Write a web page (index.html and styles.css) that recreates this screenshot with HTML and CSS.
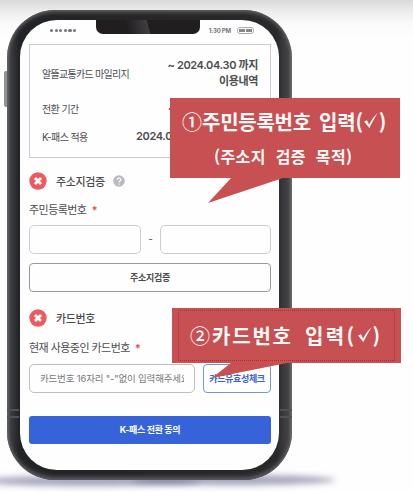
FILE: index.html
```html
<!DOCTYPE html>
<html lang="ko">
<head>
<meta charset="utf-8">
<title>K-패스 전환 동의</title>
<link rel="stylesheet" href="styles.css">
</head>
<body>
<main class="stage">
  <div class="ground ground-left"></div>
  <div class="ground ground-right"></div>
  <div class="side-key"></div>
  <section class="phone">
    <i class="band band-left"></i><i class="band band-right"></i>
    <div class="screen">
      <div class="notch"></div>
      <header class="status">
        <span class="carrier"><i></i><i></i><i></i><i></i><i></i><i></i></span>
        <span class="clock">1:30 PM</span>
        <span class="battery"><i></i><i></i><i></i><i></i></span>
      </header>
      <div class="summary">
        <div class="row row-tall"><span class="key key-long">알뜰교통카드 마일리지</span><span class="value">~ 2024.04.30 까지<br>이용내역</span></div>
        <div class="row"><span class="key">전환 기간</span><span class="value value-mid">~</span></div>
        <div class="row"><span class="key">K-패스 적용</span><span class="value value-wide">2024.0</span></div>
      </div>
      <h2 class="heading">
        <svg class="cross" viewBox="0 0 18 18"><circle cx="9" cy="9" r="8.7"/><path d="M6 6l6 6M12 6l-6 6"/></svg>
        <span>주소지검증</span>
        <svg class="help" viewBox="0 0 12 12"><circle cx="6" cy="6" r="5.8"/><path d="M4.2 4.8c0-2.5 3.7-2.3 3.6-.1C7.8 6 6 5.8 6 7.3M6 8.5v1.2"/></svg>
      </h2>
      <div class="label">주민등록번호<b>*</b></div>
      <div class="pair"><div class="input"></div><span>-</span><div class="input"></div></div>
      <div class="verify">주소지검증</div>
      <h2 class="heading heading-card">
        <svg class="cross" viewBox="0 0 18 18"><circle cx="9" cy="9" r="8.7"/><path d="M6 6l6 6M12 6l-6 6"/></svg>
        <span>카드번호</span>
      </h2>
      <div class="label label-card">현재 사용중인 카드번호<b>*</b></div>
      <div class="card-line"><div class="input card-input"><span>카드번호 16자리 "-"없이 입력해주세요</span></div><div class="check">카드유효성체크</div></div>
      <div class="submit">K-패스 전환 동의</div>
    </div>
  </section>
  <aside class="callout callout-one">
    <svg class="tail" viewBox="0 0 80 27"><path d="M24 0L0 26L78 0z"/></svg>
    <p class="title"><span class="num">①</span><span class="w1">주민등록번호</span><span class="w2">입력(<svg class="tick" viewBox="0 0 16 18"><path d="M1 8.500l3-1.200 2 4.200Q9.500 4.500 14.500 0 10 8 6.300 15z"/></svg>)</span></p>
    <p class="sub">(주소지 검증 목적)</p>
  </aside>
  <aside class="callout callout-two">
    <svg class="tail" viewBox="0 0 80 17"><path d="M20 0L0 16L80 0z"/></svg>
    <div class="dots"></div>
    <p class="title"><span class="num">②</span><span class="w1">카드번호</span><span class="w2">입력(<svg class="tick" viewBox="0 0 16 18"><path d="M1 8.500l3-1.200 2 4.200Q9.500 4.500 14.500 0 10 8 6.300 15z"/></svg>)</span></p>
  </aside>
</main>
</body>
</html>
```
FILE: styles.css
```css
* { box-sizing: border-box; }
body { margin: 0; font-family: Inter, "Noto Sans CJK KR", sans-serif; }
h2, p { margin: 0; }
.stage {
  position: relative;
  width: 413px;
  height: 492px;
  padding: 10px 0 0 7px;
  overflow: hidden;
  background: linear-gradient(#d9d9d9 0, #eee 12px, #fafafa 24px, #fefefe 40px);
}
.ground { position: absolute; height: 10px; border-radius: 50%; background: #65658c; filter: blur(3px); }
.ground-left { left: -20px; top: 476px; width: 220px; opacity: .6; }
.ground-right { left: 130px; top: 475px; width: 205px; opacity: .6; }
.side-key { position: absolute; left: 4px; top: 71px; width: 4px; height: 36px; border-radius: 2px 0 0 2px; background: #929292; }
.phone {
  position: relative;
  width: 285px;
  height: 470px;
  padding: 10px 13px;
  border-radius: 48px;
  background: linear-gradient(90deg, #606163 0, #3e3f42 3px, #222326 12px, #29292b 270px, #3b3b3d 277px, #444446 282px, #777 285px);
  box-shadow: inset 0 2px 4px #666, inset 0 -3px 4px #5d5d60;
}
.band { position: absolute; top: 399px; width: 12px; height: 9px; border: solid #505153; border-width: 2px 0; }
.band-left { left: 0; }
.band-right { right: 0; }
.screen {
  position: relative;
  height: 450px;
  padding: 6px 8px 0 9px;
  border-radius: 37px;
  background: #fefefe;
  color: #4c4c50;
  overflow: hidden;
}
.notch { position: absolute; left: 76px; top: 0; width: 104px; height: 14px; border-radius: 0 0 7px 7px; background: linear-gradient(75deg, #211e20 0 30%, #403e40 50%, #211e20 51%); }
.status { display: flex; align-items: center; height: 9px; padding: 0 17px 0 21px; }
.carrier { display: flex; gap: 1.3px; }
.carrier i { width: 3.3px; height: 3.3px; border-radius: 50%; background: #77777b; }
.clock { margin-left: auto; font: 700 6px/8px Inter, sans-serif; color: #77777b; letter-spacing: -.15px; }
.battery { display: flex; gap: .6px; width: 17px; height: 7px; margin-left: 6px; padding: 1px; border: 1px solid #aaa; border-radius: 3px; }
.battery i { flex: 1; background: #88888b; }
.summary { height: 114px; margin-top: 9px; padding: 12px 12px 0; border: 1px solid #c9c9ce; }
.row { display: flex; align-items: center; justify-content: space-between; height: 28px; }
.row-tall { height: 32px; margin-bottom: 5px; }
.key { font-size: 10px; letter-spacing: -.6px; white-space: nowrap; }
.key-long { letter-spacing: -.7px; }
.value { font-size: 11px; font-weight: 600; line-height: 16px; letter-spacing: -.35px; text-align: right; white-space: nowrap; }
.value-mid { width: 90px; text-align: left; }
.value-wide { width: 122px; text-align: left; }
.heading { display: flex; align-items: center; height: 18px; margin-top: 14px; font-size: 11px; font-weight: 500; letter-spacing: -.4px; }
.cross { width: 18px; height: 18px; margin-right: 9px; }
.cross circle { fill: #ec5a5d; }
.cross path { stroke: #fff; stroke-width: 2.8; }
.help { width: 12px; height: 12px; margin-left: 8px; }
.help circle { fill: #b9bac1; }
.help path { fill: none; stroke: #fff; stroke-width: 1.2; }
.label { height: 16px; margin-top: 12px; font-size: 11px; line-height: 16px; letter-spacing: -.55px; white-space: nowrap; }
.label b { margin-left: 5px; color: #dc5557; }
.pair { display: grid; grid-template-columns: 112px 19px 111px; height: 29px; margin-top: 7px; text-align: center; font-size: 10px; line-height: 29px; }
.input { border: 1px solid #cccdd1; border-radius: 5px; }
.verify { height: 29px; margin-top: 9px; border: 1px solid #99999d; border-radius: 4px; text-align: center; font-size: 9px; font-weight: 700; line-height: 27px; letter-spacing: -.3px; }
.heading-card { margin-top: 17px; }
.label-card { margin-top: 13px; }
.card-line { display: flex; gap: 8px; height: 29px; margin-top: 8px; }
.card-input { width: 166px; padding: 0 10px; border-color: #bdbdc3; color: #77777a; font-size: 9.5px; line-height: 27px; }
.card-input span { display: block; overflow: hidden; white-space: nowrap; letter-spacing: -.18px; }
.check { flex: 1; border: 1px solid #7596d8; border-radius: 4px; color: #3c65c6; text-align: center; font-size: 9px; font-weight: 700; line-height: 27px; letter-spacing: -.35px; white-space: nowrap; }
.submit { height: 28px; margin-top: 23px; border-radius: 3px; background: #3763d9; color: #fff; text-align: center; font-size: 9px; font-weight: 700; line-height: 28px; letter-spacing: -.35px; }
.callout { position: absolute; background: #c75052; color: #fffafa; font-family: "Noto Sans CJK KR", sans-serif; }
.callout-one { left: 170px; top: 98px; width: 230px; height: 80px; padding: 10px 0 0 12px; }
.callout-two { left: 172px; top: 308px; width: 229px; height: 55px; padding: 14px 0 0 18px; }
.tail { position: absolute; fill: #c75052; }
.callout-one .tail { left: 38px; top: 79px; width: 80px; height: 27px; }
.callout-two .tail { left: 40px; top: 54px; width: 80px; height: 17px; }
.dots { position: absolute; inset: 2px 6px 2px 6px; border: 1px dotted #a82f36; }
.title { display: flex; align-items: center; height: 28px; font-size: 20px; font-weight: 700; line-height: 28px; white-space: nowrap; }
.num { width: 20px; font-weight: 500; }
.w2 { display: flex; align-items: center; }
.callout-one .w1 { width: 117px; letter-spacing: -.25px; }
.callout-one .w2 { letter-spacing: -.2px; }
.callout-two .w1 { width: 95px; padding-left: 2px; letter-spacing: 1.8px; }
.callout-two .w2 { letter-spacing: 2.4px; }
.tick { width: 16px; height: 18px; fill: #fffafa; }
.sub { margin-top: 8px; padding-left: 32px; font-size: 16px; font-weight: 700; line-height: 24px; letter-spacing: .4px; word-spacing: 5px; white-space: nowrap; }
```
